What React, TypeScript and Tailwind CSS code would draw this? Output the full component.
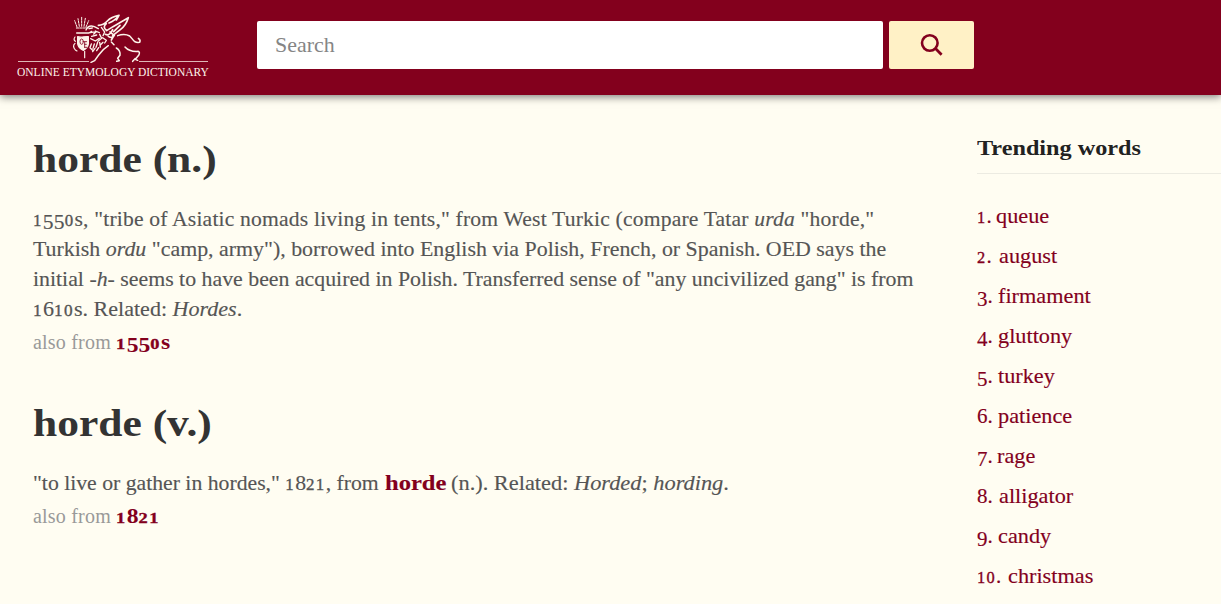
import { Fragment, ReactNode } from "react";

const SMALL = "012";
const LOW = "34579";

/** Old-style figures: 0-2 at x-height, 3/4/5/7/9 descending. */
function Old({ children }: { children: string }) {
  return (
    <>
      {children.split("").map((c, i) =>
        SMALL.includes(c) ? (
          <span key={i} className="text-[0.78em] leading-none tracking-[0.08em] [-webkit-text-stroke:0.35px]">{c}</span>
        ) : LOW.includes(c) ? (
          <span key={i} className="relative top-[0.16em]">{c}</span>
        ) : (
          <Fragment key={i}>{c}</Fragment>
        )
      )}
    </>
  );
}

function Logo() {
  return (
    <a className="flex w-[192px] flex-col text-[#fdf3ea]">
      <svg viewBox="0 0 576 162" className="h-[54px] w-[192px]" fill="none" stroke="currentColor" strokeLinecap="round" strokeLinejoin="round">
        <path d="M3 151.5H216M366 151.5H573" strokeWidth="3" strokeOpacity="0.75" strokeLinecap="butt" />
        {/* crown */}
        <path d="M180 48L173 29M187 46L183 23M194 46V18M201 46L205 22M207 48L215 29M178 51H210" strokeWidth="3" strokeDasharray="7 3" />
        <path d="M179 66H216L224 61" strokeWidth="4" />
        {/* shield */}
        <path d="M182 77C192 81 202 76 214 77V99Q212 112 199 118Q184 111 182 98Z" fill="currentColor" strokeWidth="4" />
        <path d="M174 78Q168 86 175 91M174 97Q165 105 175 117L180 120M203 121V140" strokeWidth="3.5" />
        <g stroke="#83001d" strokeWidth="2.5">
          <ellipse cx="194" cy="92" rx="5" ry="8" />
          <path d="M203 92V109M203 92H209M203 100H208M203 109H210" />
        </g>
        {/* head and mane */}
        <path d="M207 57Q215 40 232 47L244 53M216 53L226 51M220 65L238 62L230 69M224 76L239 72M221 83L235 90L247 82M235 60L247 65M223 99L219 110L227 118M232 99L228 112M242 94L237 109M248 94L250 108M258 94L250 102M227 122L234 112M239 119L245 110" strokeWidth="4" />
        <path d="M248 70L254 82L243 91M253 49L263 63L258 74M257 80L268 88L263 96" strokeWidth="4" />
        {/* wings */}
        <path d="M244 43Q259 43 271 30Q283 17 306 13Q296 28 276 36M306 13L298 27M268 38Q255 48 269 59L288 47Q313 32 334 20Q327 43 310 56Q297 66 287 74M287 56Q278 76 265 70M289 77L283 87M309 43L290 62M279 63L288 70M274 76Q286 84 292 73" strokeWidth="5" />
        {/* back and tail */}
        <path d="M302 74Q323 66 338 75C349 85 350 97 368 94Q372 87 364 82" strokeWidth="4.5" />
        {/* legs */}
        <path d="M222 154L233 149L245 132Q257 115 274 104M298 111Q311 119 309 133L302 142L307 149L299 151M324 108Q337 123 364 121Q370 124 365 133L355 145L362 148M347 151L354 143M283 93L291 101" strokeWidth="4.5" />
      </svg>
      <span className="whitespace-nowrap text-[11.5px] leading-[14px]">ONLINE ETYMOLOGY DICTIONARY</span>
    </a>
  );
}

function Heading({ children }: { children: string }) {
  return (
    <h1 className="h-[50px] origin-left scale-x-[1.16] whitespace-nowrap text-[37.5px] font-bold leading-[50px] text-[#333]">{children}</h1>
  );
}

function Also({ children }: { children: string }) {
  return (
    <div className="mt-[3px] flex h-[30px] gap-[5px] whitespace-nowrap text-[20px] leading-[30px]">
      <span className="w-[78px] tracking-[0.2px] text-[#999]">also from</span>
      <b className="origin-left scale-x-[1.18] text-[#83001d]">
        <Old>{children}</Old>
      </b>
    </div>
  );
}

function Line({ children, fit }: { children: ReactNode; fit: string }) {
  return <span className={"block h-[30px] w-fit origin-left whitespace-nowrap " + fit}>{children}</span>;
}

const words = [
  ["queue", "w-[19px]"],
  ["august", "w-[21.5px]"],
  ["firmament", "w-[21px]"],
  ["gluttony", "w-[21px]"],
  ["turkey", "w-[21px]"],
  ["patience", "w-[21px]"],
  ["rage", "w-[20px]"],
  ["alligator", "w-[22px]"],
  ["candy", "w-[21px]"],
  ["christmas", "w-[31px]"],
];

export default function App() {
  return (
    <div className="h-[604px] w-full overflow-hidden bg-[#fffdf2] font-['Liberation_Serif',serif] text-[21px] leading-[30px] text-[#555]">
      <header className="flex h-[95px] items-start bg-[#83001d] pl-[17px] shadow-[0_2px_8px_rgba(0,0,0,0.5)]">
        <div className="pt-[11px]"><Logo /></div>
        <div className="ml-[48px] mt-[21px] flex h-12 w-[626px] items-center rounded-[2px] bg-white pl-[18px] text-[#858585]">
          <span className="origin-left scale-x-[1.045]">Search</span>
        </div>
        <button className="ml-[6px] mt-[21px] flex h-12 w-[85px] items-center justify-center rounded-[2px] bg-[#fff1c6]" aria-label="Search">
          <svg viewBox="0 0 24 24" className="h-6 w-6" fill="none" stroke="#83001d" strokeWidth="2.6">
            <circle cx="9.8" cy="10" r="7.8" />
            <path d="M15.5 15.6L21.6 21.7" strokeWidth="2.8" />
          </svg>
        </button>
      </header>
      <div className="flex">
        <main className="w-[977px] pl-[33px] pt-[40px]">
          <Heading>horde (n.)</Heading>
          <p className="mt-[19px] [-webkit-text-stroke:0.15px]">
            <Line fit="scale-x-[1.028] tracking-[0.18px]"><Old>1550s</Old>, "tribe of Asiatic nomads living in tents," from West Turkic (compare Tatar <i>urda</i> "horde,"</Line>
            <Line fit="scale-x-[1.042]">Turkish <i>ordu</i> "camp, army"), borrowed into English via Polish, French, or Spanish. OED says the</Line>
            <Line fit="scale-x-[1.0395]">initial -<i>h</i>- seems to have been acquired in Polish. Transferred sense of "any uncivilized gang" is from</Line>
            <Line fit="scale-x-[1.05]"><Old>1610s</Old>. Related: <i>Hordes</i>.</Line>
          </p>
          <Also>1550s</Also>
          <div className="h-[42px]" />
          <Heading>horde (v.)</Heading>
          <p className="mt-[19px] flex whitespace-pre [-webkit-text-stroke:0.15px]">
            <span className="w-[352px]"><span className="inline-block origin-left scale-x-[1.034]">"to live or gather in hordes," <Old>1821</Old>, from </span></span>
            <b className="w-[66px] origin-left scale-x-[1.17] text-[#83001d]">horde</b>
            <span className="origin-left scale-x-[1.065]">(n.). Related: <i>Horded</i>; <i>hording</i>.</span>
          </p>
          <Also>1821</Also>
        </main>
        <aside className="flex-1 pt-[38px]">
          <h2 className="h-[41px] border-b border-[#ecebe2] font-bold text-[#222]">
            <span className="inline-block origin-left scale-x-[1.153] whitespace-nowrap">Trending words</span>
          </h2>
          <ul className="mt-[22px] [-webkit-text-stroke:0.15px]">
            {words.map(([w, width], i) => (
              <li key={w} className="flex h-10 items-center whitespace-nowrap text-[#83001d]">
                <span className={"whitespace-pre " + width}><Old>{`${i + 1}`}</Old>. </span>
                <span className="origin-left scale-x-[1.06]">{w}</span>
              </li>
            ))}
          </ul>
        </aside>
      </div>
    </div>
  );
}
